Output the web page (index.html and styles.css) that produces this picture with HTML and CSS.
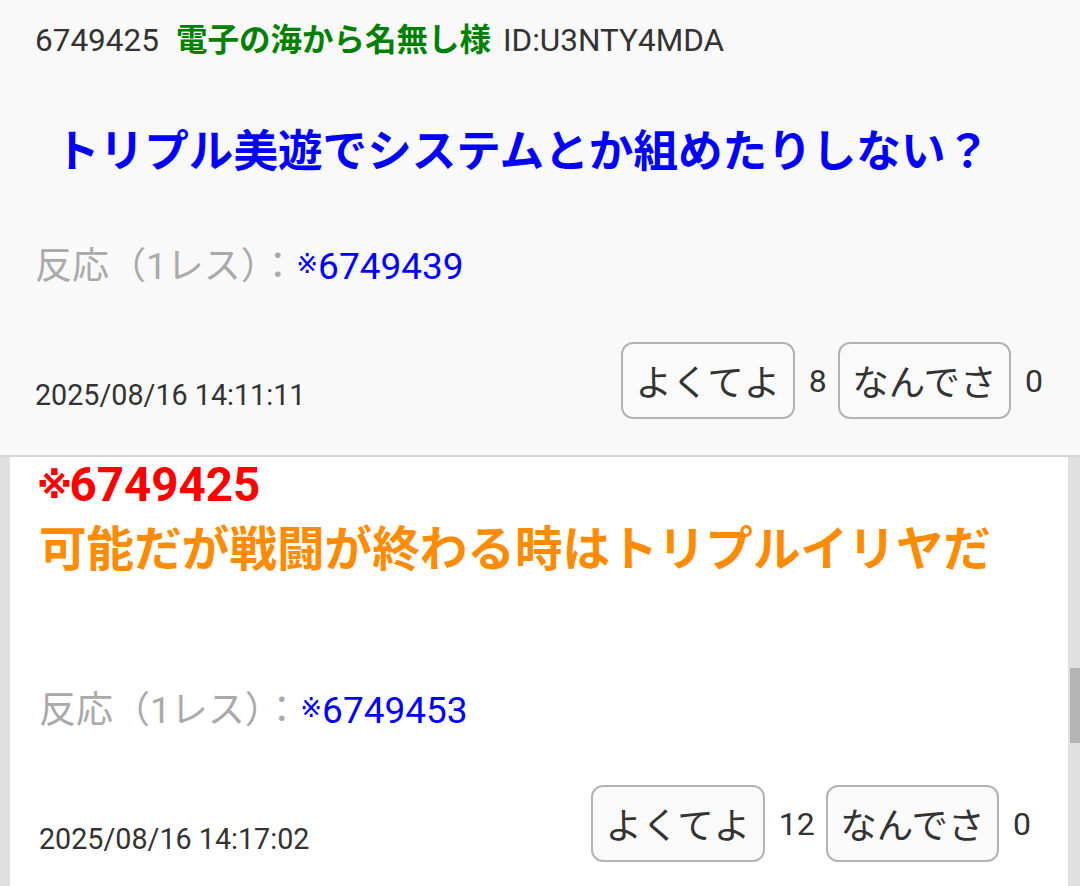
FILE: index.html
```html
<!DOCTYPE html>
<html lang="ja">
<head>
    <meta charset="UTF-8">
    <meta name="viewport" content="width=device-width, initial-scale=1.0">
    <title>スレッド</title>
    <link rel="stylesheet" href="styles.css">
</head>
<body>

    <!-- 元レス -->
    <article class="post">
        <div class="post-head">
            <span class="res-no">6749425</span>
            <span class="name">電子の海から名無し様</span>
            <span class="uid">ID:U3NTY4MDA</span>
        </div>
        <p class="message message-blue">トリプル美遊でシステムとか組めたりしない？</p>
        <p class="replies">反応（1レス）：<a href="#" class="anchor"><span class="mark">※</span>6749439</a></p>
        <div class="post-foot">
            <span class="date">2025/08/16 14:11:11</span>
            <div class="votes">
                <button class="vote-btn">よくてよ</button><span class="count">8</span>
                <button class="vote-btn">なんでさ</button><span class="count">0</span>
            </div>
        </div>
    </article>

    <!-- 返信ポップアップ -->
    <div class="popup">
        <article class="post post-quoted">
            <p class="quote-no"><span class="mark">※</span>6749425</p>
            <p class="message message-orange">可能だが戦闘が終わる時はトリプルイリヤだ</p>
            <p class="replies replies-far">反応（1レス）：<a href="#" class="anchor"><span class="mark">※</span>6749453</a></p>
            <div class="post-foot">
                <span class="date">2025/08/16 14:17:02</span>
                <div class="votes">
                    <button class="vote-btn">よくてよ</button><span class="count">12</span>
                    <button class="vote-btn">なんでさ</button><span class="count">0</span>
                </div>
            </div>
        </article>
        <div class="scroll-track"><div class="scroll-thumb"></div></div>
    </div>

</body>
</html>
```

FILE: styles.css
```css
* {
    margin: 0;
    padding: 0;
    box-sizing: border-box;
    font-family: Roboto, 'Noto Sans CJK JP', sans-serif;
}
html, body {
    overflow: hidden;
}
body {
    background-color: #ffffff;
    color: #333333;
}
.post {
    background: #f9f9f9;
    padding: 20px 26px 36px 35px;
    border-bottom: 2px solid #d6d6d6;
}
.post-head {
    display: flex;
    font-size: 31.5px;
    line-height: 42px;
}
.res-no {
    margin-right: 17px;
}
.name {
    color: #008000;
    font-weight: 700;
    margin-right: 12px;
}
.message {
    font-weight: 700;
}
.message-blue {
    margin-top: 57px;
    padding-left: 20px;
    font-size: 44.6px;
    line-height: 66px;
    color: #0000ff;
}
.replies {
    margin-top: 58px;
    font-size: 37px;
    line-height: 48px;
    color: #aaaaaa;
}
.anchor {
    color: #0000ff;
    text-decoration: none;
}
.mark {
    font-family: 'DejaVu Sans', 'Noto Sans CJK JP', sans-serif;
    line-height: 0;
}
.anchor .mark {
    font-size: 26px;
    vertical-align: 6px;
}
.post-foot {
    margin-top: 51px;
    display: flex;
    justify-content: space-between;
    align-items: flex-end;
}
.date {
    font-size: 28.7px;
    line-height: 34px;
    margin-bottom: 7px;
}
.votes {
    display: flex;
    align-items: center;
}
.vote-btn {
    height: 77px;
    padding: 0 12.5px;
    font-size: 36.5px;
    color: #333333;
    background: #fafafa;
    border: 2px solid #b3b3b3;
    border-radius: 12px;
    cursor: pointer;
}
.count {
    font-size: 32px;
    margin: 0 11px 0 14px;
}

/* popup */
.popup {
    display: flex;
    border-left: 10px solid #e0e0e0;
}
.post-quoted {
    flex: 1;
    background: #ffffff;
    padding: 0 26px 36px 29px;
    border-bottom: none;
}
.quote-no {
    font-size: 47.5px;
    line-height: 56px;
    font-weight: 700;
    color: #ff0000;
}
.quote-no .mark {
    font-size: 36px;
    margin: 0 -2.5px 0 -2px;
    vertical-align: 3px;
}
.message-orange {
    margin-top: 4px;
    font-size: 47.6px;
    line-height: 66px;
    color: #ff8c00;
}
.replies-far {
    margin-top: 104px;
}
.post-quoted .post-foot {
    margin-top: 50px;
}
.post-quoted .date {
    margin-bottom: 6px;
}
.scroll-track {
    flex: none;
    width: 12px;
    background: #e0e0e0;
}
.scroll-thumb {
    margin-top: 211px;
    margin-left: 2px;
    height: 75px;
    background: #b4b4b4;
}
```
